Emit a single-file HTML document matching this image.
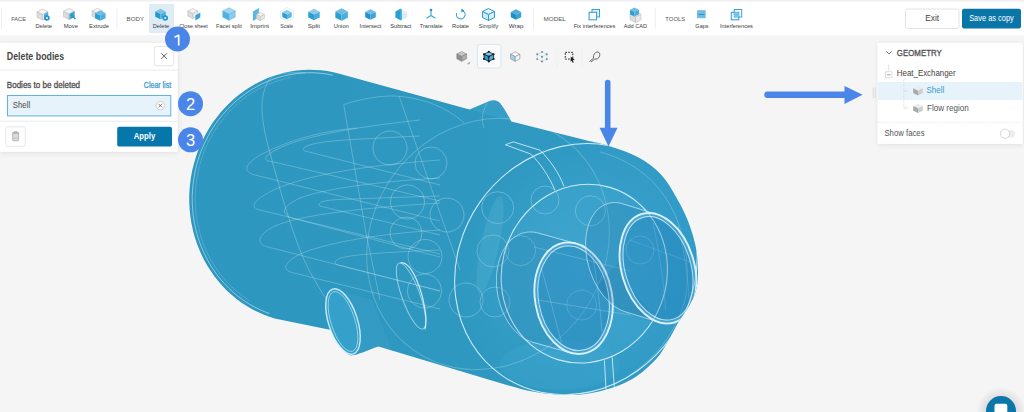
<!DOCTYPE html>
<html><head><meta charset="utf-8"><style>
*{box-sizing:border-box;margin:0;padding:0}
html,body{width:1024px;height:412px;overflow:hidden;background:#f5f5f5;font-family:"Liberation Sans", sans-serif;}
.abs{position:absolute}
svg text{font-family:"Liberation Sans", sans-serif}
</style></head><body>
<svg class="abs" style="left:0;top:0" width="1024" height="40"><rect x="0" y="0" width="1024" height="35.3" fill="#fff"/><rect x="0" y="0" width="1024" height="1.6" fill="#f0f0f0"/></svg>
<svg class="abs" style="left:0;top:0" width="1024" height="36"><rect x="149" y="4" width="25" height="29" fill="#deedf5"/><line x1="1.5" y1="8" x2="1.5" y2="29" stroke="#e8e8e8" stroke-width="0.8"/><line x1="117" y1="8" x2="117" y2="29" stroke="#e8e8e8" stroke-width="0.8"/><line x1="533.6" y1="8" x2="533.6" y2="29" stroke="#e8e8e8" stroke-width="0.8"/><line x1="655.3" y1="8" x2="655.3" y2="29" stroke="#e8e8e8" stroke-width="0.8"/><text x="11.17" y="20.90" font-size="5.87" font-weight="normal" fill="#555" textLength="14.87" lengthAdjust="spacingAndGlyphs">FACE</text><text x="126.57" y="20.90" font-size="5.87" font-weight="normal" fill="#555" textLength="17.47" lengthAdjust="spacingAndGlyphs">BODY</text><text x="543.57" y="20.90" font-size="5.87" font-weight="normal" fill="#555" textLength="22.27" lengthAdjust="spacingAndGlyphs">MODEL</text><text x="665.27" y="20.90" font-size="5.87" font-weight="normal" fill="#555" textLength="19.97" lengthAdjust="spacingAndGlyphs">TOOLS</text><text x="35.46" y="27.60" font-size="6.01" font-weight="normal" fill="#3a3a3a" textLength="16.58" lengthAdjust="spacingAndGlyphs">Delete</text><polygon points="42.5,9.0 48.0,11.75 42.5,14.5 37.0,11.75" fill="#f4f4f4" stroke="#bdbdbd" stroke-width="0.6" stroke-linejoin="round"/><polygon points="37.0,11.75 42.5,14.5 42.5,20.0 37.0,17.25" fill="#dcdcdc" stroke="#bdbdbd" stroke-width="0.6" stroke-linejoin="round"/><polygon points="42.5,14.5 48.0,11.75 48.0,17.25 42.5,20.0" fill="#e9e9e9" stroke="#bdbdbd" stroke-width="0.6" stroke-linejoin="round"/><polygon points="44,14.5 48,12.0 48,17.5 44,20.0" fill="#4aaee0"/><circle cx="47" cy="18.0" r="2.7" fill="#1f95cf"/><circle cx="47" cy="18.0" r="1" fill="#fff"/><text x="63.76" y="27.60" font-size="6.01" font-weight="normal" fill="#3a3a3a" textLength="14.18" lengthAdjust="spacingAndGlyphs">Move</text><polygon points="69,8.5 74.5,11.25 69,14.0 63.5,11.25" fill="#f4f4f4" stroke="#bdbdbd" stroke-width="0.6" stroke-linejoin="round"/><polygon points="63.5,11.25 69,14.0 69,19.5 63.5,16.75" fill="#dcdcdc" stroke="#bdbdbd" stroke-width="0.6" stroke-linejoin="round"/><polygon points="69,14.0 74.5,11.25 74.5,16.75 69,19.5" fill="#e9e9e9" stroke="#bdbdbd" stroke-width="0.6" stroke-linejoin="round"/><polygon points="69.5,14.0 74.5,11.3 74.5,16.8 69.5,19.5" fill="#3aa3d6"/><line x1="71" y1="15.0" x2="75.5" y2="19.0" stroke="#1f8fc4" stroke-width="1.4"/><text x="89.06" y="27.60" font-size="6.01" font-weight="normal" fill="#3a3a3a" textLength="19.88" lengthAdjust="spacingAndGlyphs">Extrude</text><polygon points="97.3,8.25 102.55,10.875 97.3,13.5 92.05,10.875" fill="#f4f4f4" stroke="#bdbdbd" stroke-width="0.6" stroke-linejoin="round"/><polygon points="92.05,10.875 97.3,13.5 97.3,18.75 92.05,16.125" fill="#dcdcdc" stroke="#bdbdbd" stroke-width="0.6" stroke-linejoin="round"/><polygon points="97.3,13.5 102.55,10.875 102.55,16.125 97.3,18.75" fill="#e9e9e9" stroke="#bdbdbd" stroke-width="0.6" stroke-linejoin="round"/><polygon points="100.3,10.25 105.55,12.875 100.3,15.5 95.05,12.875" fill="#6fbde4"/><polygon points="95.05,12.875 100.3,15.5 100.3,20.75 95.05,18.125" fill="#2b9fd3"/><polygon points="100.3,15.5 105.55,12.875 105.55,18.125 100.3,20.75" fill="#4aaedd"/><text x="152.76" y="27.60" font-size="6.01" font-weight="normal" fill="#3a3a3a" textLength="16.48" lengthAdjust="spacingAndGlyphs">Delete</text><polygon points="160.5,8.75 165.75,11.375 160.5,14.0 155.25,11.375" fill="#7cc3e6"/><polygon points="155.25,11.375 160.5,14.0 160.5,19.25 155.25,16.625" fill="#2596cc"/><polygon points="160.5,14.0 165.75,11.375 165.75,16.625 160.5,19.25" fill="#4aaedd"/><circle cx="165.2" cy="18.0" r="2.8" fill="#1f95cf"/><circle cx="165.2" cy="18.0" r="1.1" fill="#e6f1f7"/><text x="179.16" y="27.60" font-size="6.01" font-weight="normal" fill="#3a3a3a" textLength="28.68" lengthAdjust="spacingAndGlyphs">Close sheet</text><polygon points="192.8,8.5 197.8,11.0 192.8,13.5 187.8,11.0" fill="#f4f4f4" stroke="#bdbdbd" stroke-width="0.6" stroke-linejoin="round"/><polygon points="187.8,11.0 192.8,13.5 192.8,18.5 187.8,16.0" fill="#dcdcdc" stroke="#bdbdbd" stroke-width="0.6" stroke-linejoin="round"/><polygon points="192.8,13.5 197.8,11.0 197.8,16.0 192.8,18.5" fill="#e9e9e9" stroke="#bdbdbd" stroke-width="0.6" stroke-linejoin="round"/><polygon points="195.3,15.5 200.3,12.5 200.3,17.5 195.3,20.5" fill="#3aa3d6"/><text x="216.06" y="27.60" font-size="6.01" font-weight="normal" fill="#3a3a3a" textLength="25.68" lengthAdjust="spacingAndGlyphs">Facet split</text><polygon points="229,7.75 235.25,10.875 229,14.0 222.75,10.875" fill="#a6d6ef" stroke="#5cb6e0" stroke-width="0.5" stroke-linejoin="round"/><polygon points="222.75,10.875 229,14.0 229,20.25 222.75,17.125" fill="#4fb1de" stroke="#5cb6e0" stroke-width="0.5" stroke-linejoin="round"/><polygon points="229,14.0 235.25,10.875 235.25,17.125 229,20.25" fill="#8ccbea" stroke="#5cb6e0" stroke-width="0.5" stroke-linejoin="round"/><text x="250.16" y="27.60" font-size="6.01" font-weight="normal" fill="#3a3a3a" textLength="18.88" lengthAdjust="spacingAndGlyphs">Imprint</text><polygon points="252.89999999999998,11.5 258.9,8.0 258.9,17.5 252.89999999999998,21.0" fill="#5cb6e0"/><polygon points="260.4,12.5 264.4,14.5 260.4,16.5 256.4,14.5" fill="#f4f4f4" stroke="#bdbdbd" stroke-width="0.6" stroke-linejoin="round"/><polygon points="256.4,14.5 260.4,16.5 260.4,20.5 256.4,18.5" fill="#dcdcdc" stroke="#bdbdbd" stroke-width="0.6" stroke-linejoin="round"/><polygon points="260.4,16.5 264.4,14.5 264.4,18.5 260.4,20.5" fill="#e9e9e9" stroke="#bdbdbd" stroke-width="0.6" stroke-linejoin="round"/><text x="280.26" y="27.60" font-size="6.01" font-weight="normal" fill="#3a3a3a" textLength="12.98" lengthAdjust="spacingAndGlyphs">Scale</text><polygon points="287,7.5 293.5,11.0 293.5,18.0 287,21.5 280.5,18.0 280.5,11.0" fill="none" stroke="#cfe8f5" stroke-width="0.7"/><polygon points="287,9.75 291.75,12.125 287,14.5 282.25,12.125" fill="#8fcbea"/><polygon points="282.25,12.125 287,14.5 287,19.25 282.25,16.875" fill="#2b9fd3"/><polygon points="287,14.5 291.75,12.125 291.75,16.875 287,19.25" fill="#5cb6e0"/><text x="307.76" y="27.60" font-size="6.01" font-weight="normal" fill="#3a3a3a" textLength="12.28" lengthAdjust="spacingAndGlyphs">Split</text><polygon points="314,8.75 319.75,11.625 314,14.5 308.25,11.625" fill="#8fcbea"/><polygon points="308.25,11.625 314,14.5 314,20.25 308.25,17.375" fill="#2b9fd3"/><polygon points="314,14.5 319.75,11.625 319.75,17.375 314,20.25" fill="#4aaedd"/><text x="333.76" y="27.60" font-size="6.01" font-weight="normal" fill="#3a3a3a" textLength="15.08" lengthAdjust="spacingAndGlyphs">Union</text><polygon points="341.6,8.25 347.85,11.375 341.6,14.5 335.35,11.375" fill="#6fbde4"/><polygon points="335.35,11.375 341.6,14.5 341.6,20.75 335.35,17.625" fill="#2b9fd3"/><polygon points="341.6,14.5 347.85,11.375 347.85,17.625 341.6,20.75" fill="#4aaedd"/><text x="359.56" y="27.60" font-size="6.01" font-weight="normal" fill="#3a3a3a" textLength="21.88" lengthAdjust="spacingAndGlyphs">Intersect</text><polygon points="364.5,11.5 376.5,11.5 376.5,17.5 364.5,17.5" fill="#e3f1f9"/><polygon points="370.5,9.25 375.75,11.875 370.5,14.5 365.25,11.875" fill="#6fbde4"/><polygon points="365.25,11.875 370.5,14.5 370.5,19.75 365.25,17.125" fill="#2590c6"/><polygon points="370.5,14.5 375.75,11.875 375.75,17.125 370.5,19.75" fill="#3aa3d6"/><text x="390.16" y="27.60" font-size="6.01" font-weight="normal" fill="#3a3a3a" textLength="21.28" lengthAdjust="spacingAndGlyphs">Subtract</text><polygon points="401.4,8.75 407.15,11.625 401.4,14.5 395.65,11.625" fill="#e6f3fa"/><polygon points="395.65,11.625 401.4,14.5 401.4,20.25 395.65,17.375" fill="#e6f3fa"/><polygon points="401.4,14.5 407.15,11.625 407.15,17.375 401.4,20.25" fill="#d8edf7"/><polygon points="395.4,11.5 400.9,8.5 400.9,20.5 395.4,17.5" fill="#2b9fd3"/><polygon points="400.9,8.5 401.9,9.5 401.9,19.5 400.9,20.5" fill="#4aaedd"/><text x="419.76" y="27.60" font-size="6.01" font-weight="normal" fill="#3a3a3a" textLength="22.78" lengthAdjust="spacingAndGlyphs">Translate</text><g stroke="#3aa3d6" stroke-width="1.1" fill="none"><line x1="431" y1="10.5" x2="431" y2="15.5"/><line x1="431" y1="15.5" x2="426.5" y2="18.3"/><line x1="431" y1="15.5" x2="435.5" y2="18.3"/></g><circle cx="431" cy="10.0" r="1.3" fill="#1f95cf"/><text x="452.06" y="27.60" font-size="6.01" font-weight="normal" fill="#3a3a3a" textLength="16.98" lengthAdjust="spacingAndGlyphs">Rotate</text><path d="M462.90000000000003,10.9 A4.3,4.3 0 1 1 456.8,13.0" fill="none" stroke="#3aa3d6" stroke-width="1.1"/><polygon points="461.40000000000003,8.5 464.40000000000003,10.7 461.40000000000003,12.5" fill="#1f95cf"/><text x="478.76" y="27.60" font-size="6.01" font-weight="normal" fill="#3a3a3a" textLength="19.48" lengthAdjust="spacingAndGlyphs">Simplify</text><polygon points="488.5,8.5 494.5,11.5 488.5,14.5 482.5,11.5" fill="#e6f3fa" stroke="#2b9fd3" stroke-width="1" stroke-linejoin="round"/><polygon points="482.5,11.5 488.5,14.5 488.5,20.5 482.5,17.5" fill="#cfe8f5" stroke="#2b9fd3" stroke-width="1" stroke-linejoin="round"/><polygon points="488.5,14.5 494.5,11.5 494.5,17.5 488.5,20.5" fill="#dceff8" stroke="#2b9fd3" stroke-width="1" stroke-linejoin="round"/><text x="508.86" y="27.60" font-size="6.01" font-weight="normal" fill="#3a3a3a" textLength="14.58" lengthAdjust="spacingAndGlyphs">Wrap</text><polygon points="516,9.25 521.25,11.875 516,14.5 510.75,11.875" fill="#4aaedd"/><polygon points="510.75,11.875 516,14.5 516,19.75 510.75,17.125" fill="#1f8fc4"/><polygon points="516,14.5 521.25,11.875 521.25,17.125 516,19.75" fill="#3aa3d6"/><text x="573.66" y="27.60" font-size="6.01" font-weight="normal" fill="#3a3a3a" textLength="41.68" lengthAdjust="spacingAndGlyphs">Fix interferences</text><rect x="592.0" y="9.5" width="7.5" height="7.5" fill="#dff0f9" stroke="#3aa3d6" stroke-width="1"/><rect x="589.0999999999999" y="12.3" width="7.5" height="7.5" fill="#fff" stroke="#3aa3d6" stroke-width="1.1"/><text x="623.66" y="27.60" font-size="6.01" font-weight="normal" fill="#3a3a3a" textLength="23.28" lengthAdjust="spacingAndGlyphs">Add CAD</text><polygon points="635.5,11.5 641.0,14.25 635.5,17.0 630.0,14.25" fill="#f4f4f4" stroke="#bdbdbd" stroke-width="0.6" stroke-linejoin="round"/><polygon points="630.0,14.25 635.5,17.0 635.5,22.5 630.0,19.75" fill="#dcdcdc" stroke="#bdbdbd" stroke-width="0.6" stroke-linejoin="round"/><polygon points="635.5,17.0 641.0,14.25 641.0,19.75 635.5,22.5" fill="#e9e9e9" stroke="#bdbdbd" stroke-width="0.6" stroke-linejoin="round"/><polygon points="634.5,7.5 639.0,9.75 634.5,12.0 630.0,9.75" fill="#6fbde4"/><polygon points="630.0,9.75 634.5,12.0 634.5,16.5 630.0,14.25" fill="#2b9fd3"/><polygon points="634.5,12.0 639.0,9.75 639.0,14.25 634.5,16.5" fill="#4aaedd"/><text x="695.36" y="27.60" font-size="6.01" font-weight="normal" fill="#3a3a3a" textLength="13.18" lengthAdjust="spacingAndGlyphs">Gaps</text><rect x="697.1" y="10.2" width="8.6" height="8" fill="#6fbde4"/><line x1="698.4" y1="14.5" x2="704.4" y2="14.5" stroke="#1f8fc4" stroke-width="0.9"/><text x="719.96" y="27.60" font-size="6.01" font-weight="normal" fill="#3a3a3a" textLength="32.98" lengthAdjust="spacingAndGlyphs">Interferences</text><rect x="731.3" y="12.3" width="7.5" height="7.5" fill="none" stroke="#3aa3d6" stroke-width="1.1"/><rect x="734.2" y="9.5" width="7.5" height="7.5" fill="none" stroke="#3aa3d6" stroke-width="1"/><rect x="734.2" y="12.3" width="4.6" height="4.6" fill="#7cc3e6"/><rect x="905.5" y="9" width="53.5" height="19.5" rx="2" fill="#fff" stroke="#e3e3e3" stroke-width="1"/><text x="925.25" y="21.25" font-size="8.73" font-weight="normal" fill="#444" textLength="13.85" lengthAdjust="spacingAndGlyphs">Exit</text><rect x="962" y="8.8" width="59" height="19.8" rx="2" fill="#0a76a8"/><text x="969.14" y="21.25" font-size="8.94" font-weight="normal" fill="#fff" textLength="44.72" lengthAdjust="spacingAndGlyphs">Save as copy</text></svg><svg class="abs" style="left:0;top:0" width="1024" height="412"><defs><clipPath id="cp"><path d="M339.4,73.7 L469.5,109.5 L489,101.3 C493,99.6 497,100 500,103 C504,108 508,115 511.3,121.5 L590,141.2 C592.8,141.9 598.6,142.6 606.6,145.2 C614.6,147.8 628.6,152.1 637.7,157.0 C646.8,161.9 654.5,167.6 661.0,174.4 C667.5,181.2 672.0,189.9 676.5,197.7 C681.0,205.5 684.8,212.6 688.0,221.0 C691.2,229.4 694.3,239.0 696.0,248.0 C697.7,257.0 698.1,267.7 698.0,275.0 C697.9,282.3 697.0,286.8 695.5,292.0 C694.0,297.2 691.9,300.8 689.0,306.0 C686.1,311.2 681.7,316.8 678.0,323.0 C674.3,329.2 670.5,337.2 667.0,343.0 C663.5,348.8 662.0,352.5 657.0,358.0 C652.0,363.5 644.3,371.1 637.0,376.0 C629.7,380.9 621.7,384.5 613.0,387.5 C604.3,390.5 593.4,392.8 585.0,394.0 C576.6,395.2 570.2,395.0 562.7,394.8 C555.2,394.6 546.6,393.6 540.0,392.7 C533.4,391.8 528.8,390.9 523.0,389.5 C517.2,388.1 508.0,385.3 505.0,384.5 L378.5,346.5 C368,350 358,355 351,355.5 C345,354 338,345 336,331 L274.6,318.4 L268.7,316.5 L262.9,314.3 L257.3,311.8 L251.7,309.0 L246.4,305.8 L241.2,302.4 L236.2,298.7 L231.3,294.6 L226.7,290.4 L222.3,285.8 L218.2,281.1 L214.2,276.1 L210.6,270.8 L207.2,265.4 L204.0,259.8 L201.2,254.0 L198.6,248.1 L196.4,242.0 L194.4,235.8 L192.8,229.5 L191.4,223.0 L190.4,216.6 L189.7,210.0 L189.3,203.5 L189.2,196.9 L189.5,190.3 L190.1,183.7 L191.0,177.1 L192.2,170.6 L193.8,164.2 L195.6,157.9 L197.7,151.6 L200.2,145.5 L202.9,139.6 L206.0,133.7 L209.3,128.1 L212.8,122.6 L216.7,117.4 L220.7,112.3 L225.1,107.5 L229.6,102.9 L234.3,98.6 L239.3,94.5 L244.4,90.7 L249.7,87.2 L255.2,84.0 L260.8,81.2 L266.5,78.6 L272.4,76.3 L278.3,74.4 L284.3,72.8 L290.4,71.5 L296.6,70.6 L302.7,70.0 L308.9,69.7 L315.1,69.9 L321.2,70.3 L327.3,71.1 L333.4,72.2 L339.4,73.7 Z"/></clipPath><radialGradient id="rg" cx="0.5" cy="0.5" r="0.5"><stop offset="0" stop-color="#5cbde3" stop-opacity="0.28"/><stop offset="0.7" stop-color="#5cbde3" stop-opacity="0.10"/><stop offset="1" stop-color="#5cbde3" stop-opacity="0"/></radialGradient><linearGradient id="lg" x1="0" y1="0" x2="1" y2="0"><stop offset="0" stop-color="#2d97bf"/><stop offset="0.55" stop-color="#2e98c0"/><stop offset="1" stop-color="#329bc7"/></linearGradient></defs><path d="M339.4,73.7 L469.5,109.5 L489,101.3 C493,99.6 497,100 500,103 C504,108 508,115 511.3,121.5 L590,141.2 C592.8,141.9 598.6,142.6 606.6,145.2 C614.6,147.8 628.6,152.1 637.7,157.0 C646.8,161.9 654.5,167.6 661.0,174.4 C667.5,181.2 672.0,189.9 676.5,197.7 C681.0,205.5 684.8,212.6 688.0,221.0 C691.2,229.4 694.3,239.0 696.0,248.0 C697.7,257.0 698.1,267.7 698.0,275.0 C697.9,282.3 697.0,286.8 695.5,292.0 C694.0,297.2 691.9,300.8 689.0,306.0 C686.1,311.2 681.7,316.8 678.0,323.0 C674.3,329.2 670.5,337.2 667.0,343.0 C663.5,348.8 662.0,352.5 657.0,358.0 C652.0,363.5 644.3,371.1 637.0,376.0 C629.7,380.9 621.7,384.5 613.0,387.5 C604.3,390.5 593.4,392.8 585.0,394.0 C576.6,395.2 570.2,395.0 562.7,394.8 C555.2,394.6 546.6,393.6 540.0,392.7 C533.4,391.8 528.8,390.9 523.0,389.5 C517.2,388.1 508.0,385.3 505.0,384.5 L378.5,346.5 C368,350 358,355 351,355.5 C345,354 338,345 336,331 L274.6,318.4 L268.7,316.5 L262.9,314.3 L257.3,311.8 L251.7,309.0 L246.4,305.8 L241.2,302.4 L236.2,298.7 L231.3,294.6 L226.7,290.4 L222.3,285.8 L218.2,281.1 L214.2,276.1 L210.6,270.8 L207.2,265.4 L204.0,259.8 L201.2,254.0 L198.6,248.1 L196.4,242.0 L194.4,235.8 L192.8,229.5 L191.4,223.0 L190.4,216.6 L189.7,210.0 L189.3,203.5 L189.2,196.9 L189.5,190.3 L190.1,183.7 L191.0,177.1 L192.2,170.6 L193.8,164.2 L195.6,157.9 L197.7,151.6 L200.2,145.5 L202.9,139.6 L206.0,133.7 L209.3,128.1 L212.8,122.6 L216.7,117.4 L220.7,112.3 L225.1,107.5 L229.6,102.9 L234.3,98.6 L239.3,94.5 L244.4,90.7 L249.7,87.2 L255.2,84.0 L260.8,81.2 L266.5,78.6 L272.4,76.3 L278.3,74.4 L284.3,72.8 L290.4,71.5 L296.6,70.6 L302.7,70.0 L308.9,69.7 L315.1,69.9 L321.2,70.3 L327.3,71.1 L333.4,72.2 L339.4,73.7 Z" fill="url(#lg)"/><g clip-path="url(#cp)"><ellipse cx="576" cy="269" rx="130" ry="117" transform="rotate(-55 576 269)" fill="url(#rg)"/><ellipse cx="560" cy="365" rx="60" ry="25" fill="rgba(90,190,230,0.12)"/><path d="M469.5,109.5 L489,101.3 C493,99.6 497,100 500,103 C504,108 508,115 511.3,121.5 Z" fill="rgba(110,200,235,0.13)"/><path d="M487,103 C482,112 481,120 484,128" fill="none" stroke="rgba(220,243,253,0.26)" stroke-width="1"/><path d="M333,290 L372,300 L392,349 L353,356 Z" fill="rgba(110,200,235,0.10)"/><path d="M269.6,313.6 L269.6,313.6 L264.0,311.5 L258.5,309.0 L253.1,306.3 L247.8,303.2 L242.8,299.8 L237.9,296.2 L233.2,292.3 L228.7,288.1 L224.4,283.7 L220.3,279.0 L216.5,274.1 L212.9,269.0 L209.6,263.7 L206.6,258.2 L203.8,252.6 L201.3,246.8 L199.1,240.8 L197.2,234.8 L195.6,228.6 L194.3,222.4 L193.3,216.1 L192.7,209.7 L192.3,203.3 L192.2,196.8 L192.5,190.4 L193.1,184.0 L194.0,177.6 L195.1,171.3 L196.6,165.0 L198.4,158.9 L200.5,152.8 L202.9,146.8 L205.6,141.0 L208.5,135.3 L211.7,129.8 L215.2,124.5 L218.9,119.3 L222.9,114.4 L227.1,109.7 L231.5,105.2 L236.1,101.0 L241.0,97.0 L246.0,93.3 L251.1,89.9 L256.5,86.8 L261.9,83.9 L267.5,81.4 L273.2,79.2 L279.0,77.3 L284.9,75.7 L290.8,74.5 L296.8,73.6 L302.8,73.0 L308.9,72.7 L314.9,72.8 L320.9,73.3 L326.9,74.0 L332.8,75.2" fill="none" stroke="rgba(220,243,253,0.60)" stroke-width="0.9"/><path d="M249.3,300.6 L249.3,300.6 L244.4,297.3 L239.6,293.7 L235.0,289.9 L230.6,285.8 L226.5,281.5 L222.5,276.9 L218.8,272.2 L215.3,267.2 L212.1,262.0 L209.1,256.7 L206.5,251.2 L204.0,245.5 L201.9,239.7 L200.1,233.8 L198.5,227.8 L197.3,221.7 L196.3,215.5 L195.7,209.3 L195.3,203.1 L195.2,196.8 L195.5,190.6 L196.1,184.3 L196.9,178.1 L198.1,171.9 L199.5,165.8 L201.3,159.8 L203.3,153.9 L205.6,148.1 L208.2,142.4 L211.1,136.9 L214.2,131.5 L217.6,126.3 L221.2,121.3 L225.1,116.5 L229.1,111.9 L233.4,107.5 L237.9,103.4 L242.6,99.5 L247.5,95.9 L252.5,92.5 L257.7,89.5 L263.1,86.7 L268.5,84.2 L274.1,82.1 L279.7,80.2 L285.5,78.7 L291.2,77.4" fill="none" stroke="rgba(220,243,253,0.26)" stroke-width="0.8"/><path d="M305,72.5 C300.8,72.8 286.2,72.4 280.0,74.0 C273.8,75.6 270.9,77.0 267.9,82.0 C264.9,87.0 262.5,95.2 262.0,103.7 C261.5,112.2 262.9,121.8 265.0,132.8 C267.1,143.9 270.8,156.0 274.7,170.0 C278.6,184.0 283.4,201.7 288.3,216.6 C293.2,231.5 298.0,246.4 303.8,259.3 C309.6,272.2 316.7,283.9 323.2,294.3 C329.7,304.7 336.5,313.9 342.6,321.5 C348.7,329.1 357.1,336.9 360.0,340.0" fill="none" stroke="rgba(220,243,253,0.30)" stroke-width="1"/><ellipse cx="488" cy="244" rx="129.6" ry="117" transform="rotate(-55.1 488 244)" fill="none" stroke="rgba(220,243,253,0.26)" stroke-width="1"/><path d="M343.7,104.6 C360,99 380,95.5 395,96 C410,97 425,100 440,107 C450,112 458,117 464,123 M343.7,104.6 L365.6,230.7 L380,300 M399,96 L460,270" fill="none" stroke="rgba(220,243,253,0.30)" stroke-width="0.9"/><path d="M357,128 C320,131 290,140 262,154 C246,163 240,172 257,175.5 L440,221" fill="none" stroke="rgba(220,243,253,0.30)" stroke-width="0.9"/><path d="M420,120 C345,128 300,138 280,148 C262,156 262,161 274,162 L440,201" fill="none" stroke="rgba(220,243,253,0.30)" stroke-width="0.9"/><path d="M420,136 C360,139 335,140 318,143 C301,146 300,151 309,152 L440,185" fill="none" stroke="rgba(220,243,253,0.30)" stroke-width="0.9"/><path d="M440,160 C360,166 310,175 278,188 C258,197 248,206 258,209.5 L440,254" fill="none" stroke="rgba(220,243,253,0.30)" stroke-width="0.9"/><path d="M440,178 C370,182 320,190 300,198 C285,205 278,213 292,218 L440,257" fill="none" stroke="rgba(220,243,253,0.30)" stroke-width="0.9"/><path d="M440,196 C380,198 345,199 332,200 C318,201 315,206 324,207 L440,235" fill="none" stroke="rgba(220,243,253,0.30)" stroke-width="0.9"/><path d="M440,203 C360,208 300,215 275,226 C258,234 255,244 268,247 L440,291" fill="none" stroke="rgba(220,243,253,0.30)" stroke-width="0.9"/><path d="M440,230 C370,234 320,245 300,254 C285,262 280,270 294,273 L440,309" fill="none" stroke="rgba(220,243,253,0.30)" stroke-width="0.9"/><path d="M440,250 C390,252 360,254 345,257 C333,259 332,265 342,266 L440,291" fill="none" stroke="rgba(220,243,253,0.30)" stroke-width="0.9"/><circle cx="390" cy="148" r="17" fill="none" stroke="rgba(220,243,253,0.30)" stroke-width="1"/><circle cx="431" cy="163" r="16" fill="none" stroke="rgba(220,243,253,0.30)" stroke-width="1"/><circle cx="407.5" cy="202" r="17" fill="none" stroke="rgba(220,243,253,0.30)" stroke-width="1"/><circle cx="447" cy="215" r="17" fill="none" stroke="rgba(220,243,253,0.30)" stroke-width="1"/><circle cx="406" cy="233" r="16" fill="none" stroke="rgba(220,243,253,0.30)" stroke-width="1"/><circle cx="425" cy="256.5" r="17" fill="none" stroke="rgba(220,243,253,0.30)" stroke-width="1"/><circle cx="424.5" cy="291" r="17" fill="none" stroke="rgba(220,243,253,0.30)" stroke-width="1"/><circle cx="466" cy="300" r="17" fill="none" stroke="rgba(220,243,253,0.30)" stroke-width="1"/><circle cx="497.7" cy="207.7" r="16" fill="none" stroke="rgba(220,243,253,0.30)" stroke-width="1"/><circle cx="493" cy="251" r="16" fill="none" stroke="rgba(220,243,253,0.30)" stroke-width="1"/><circle cx="495" cy="302" r="15" fill="none" stroke="rgba(220,243,253,0.30)" stroke-width="1"/><circle cx="590.4" cy="210.8" r="15" fill="none" stroke="rgba(220,243,253,0.30)" stroke-width="1"/><circle cx="520.6" cy="250.6" r="15" fill="none" stroke="rgba(220,243,253,0.30)" stroke-width="1"/><circle cx="581.7" cy="305" r="15" fill="none" stroke="rgba(220,243,253,0.30)" stroke-width="1"/><circle cx="545" cy="200" r="14" fill="none" stroke="rgba(220,243,253,0.30)" stroke-width="1"/><circle cx="640" cy="250" r="14" fill="none" stroke="rgba(220,243,253,0.30)" stroke-width="1"/><ellipse cx="490" cy="245" rx="9" ry="50" transform="rotate(12 490 245)" fill="rgba(140,210,240,0.14)"/><ellipse cx="575.9" cy="269.1" rx="129.6" ry="117" transform="rotate(-55.1 575.9 269.1)" fill="none" stroke="rgba(220,243,253,0.90)" stroke-width="1.1"/><ellipse cx="584.3" cy="273.6" rx="90" ry="82.5" transform="rotate(-73.4 584.3 273.6)" fill="rgba(100,195,235,0.10)" stroke="rgba(220,243,253,0.90)" stroke-width="1.1"/><path d="M600,152 C630,160 655,178 670,205 C685,232 690,265 686,295 C680,325 660,355 630,375" fill="none" stroke="rgba(220,243,253,0.26)" stroke-width="1"/><path d="M505.4,144.8 L513.2,141.8 L540,150.2 C550,160 559,173 564,186.5 M505.4,144.8 L530.7,154 C540,163 549,176 554.8,190" fill="none" stroke="rgba(220,243,253,0.90)" stroke-width="0.9"/><path d="M604.4,360.3 L606,390 M612.2,357.2 L614.5,390" fill="none" stroke="rgba(220,243,253,0.90)" stroke-width="0.9"/><g opacity="0.13"><path d="M532.8,342.3 A38.5,56.2 -10 1 1 538.4,233.1 A38.5,56.2 -10 1 1 532.8,342.3 Z" fill="#145f91"/><path d="M570.8,352.8 L532.8,342.3 L538.4,233.1 L576.4,243.6 Z" fill="#145f91"/><path d="M570.8,352.8 A38.5,56.2 -10 1 1 576.4,243.6 A38.5,56.2 -10 1 1 570.8,352.8 Z" fill="#145f91"/></g><path d="M532.8,342.3 L532.1,342.1 L531.5,341.9 L530.8,341.6 L530.1,341.4 L529.4,341.1 L528.8,340.8 L528.1,340.5 L527.4,340.2 L526.7,339.9 L526.1,339.5 L525.4,339.2 L524.8,338.8 L524.1,338.4 L523.5,338.0 L522.8,337.5 L522.2,337.1 L521.5,336.6 L520.9,336.2 L520.3,335.7 L519.6,335.2 L519.0,334.7 L518.4,334.1 L517.8,333.6 L517.2,333.0 L516.6,332.4 L516.0,331.9 L515.4,331.3 L514.8,330.6 L514.2,330.0 L513.7,329.4 L513.1,328.7 L512.6,328.1 L512.0,327.4 L511.5,326.7 L510.9,326.0 L510.4,325.3 L509.9,324.6 L509.4,323.8 L508.9,323.1 L508.4,322.3 L507.9,321.6 L507.4,320.8 L506.9,320.0 L506.5,319.2 L506.0,318.4 L505.6,317.6 L505.1,316.7 L504.7,315.9 L504.3,315.1 L503.9,314.2 L503.5,313.3 L503.1,312.5 L502.7,311.6 L502.4,310.7 L502.0,309.8 L501.7,308.9 L501.3,308.0 L501.0,307.1 L500.7,306.2 L500.4,305.3 L500.1,304.4 L499.8,303.4 L499.5,302.5 L499.3,301.6 L499.0,300.6 L498.8,299.7 L498.6,298.7 L498.4,297.8 L498.1,296.8 L498.0,295.8 L497.8,294.9 L497.6,293.9 L497.4,292.9 L497.3,292.0 L497.2,291.0 L497.0,290.0 L496.9,289.0 L496.8,288.1 L496.7,287.1 L496.7,286.1 L496.6,285.2 L496.5,284.2 L496.5,283.2 L496.5,282.2 L496.5,281.3 L496.4,280.3 L496.5,279.4 L496.5,278.4 L496.5,277.4 L496.5,276.5 L496.6,275.5 L496.7,274.6 L496.7,273.6 L496.8,272.7 L496.9,271.8 L497.1,270.8 L497.2,269.9 L497.3,269.0 L497.5,268.1 L497.6,267.2 L497.8,266.3 L498.0,265.4 L498.2,264.5 L498.4,263.6 L498.6,262.7 L498.8,261.9 L499.1,261.0 L499.3,260.2 L499.6,259.3 L499.9,258.5 L500.1,257.7 L500.4,256.8 L500.7,256.0 L501.1,255.2 L501.4,254.5 L501.7,253.7 L502.1,252.9 L502.4,252.2 L502.8,251.4 L503.2,250.7 L503.6,250.0 L504.0,249.2 L504.4,248.5 L504.8,247.9 L505.2,247.2 L505.6,246.5 L506.1,245.9 L506.5,245.2 L507.0,244.6 L507.5,244.0 L507.9,243.4 L508.4,242.8 L508.9,242.3 L509.4,241.7 L509.9,241.2 L510.5,240.6 L511.0,240.1 L511.5,239.6 L512.1,239.1 L512.6,238.7 L513.2,238.2 L513.7,237.8 L514.3,237.3 L514.9,236.9 L515.5,236.5 L516.1,236.2 L516.7,235.8 L517.3,235.4 L517.9,235.1 L518.5,234.8 L519.1,234.5 L519.7,234.2 L520.3,233.9 L521.0,233.7 L521.6,233.5 L522.3,233.2 L522.9,233.0 L523.5,232.9 L524.2,232.7 L524.9,232.5 L525.5,232.4 L526.2,232.3 L526.8,232.2 L527.5,232.1 L528.2,232.0 L528.8,232.0 L529.5,232.0 L530.2,232.0 L530.9,232.0 L531.6,232.0 L532.2,232.0 L532.9,232.1 L533.6,232.1 L534.3,232.2 L535.0,232.3 L535.6,232.4 L536.3,232.6 L537.0,232.7 L537.7,232.9 L538.4,233.1" fill="none" stroke="rgba(220,243,253,0.75)" stroke-width="0.9"/><path d="M570.8,352.8 L532.8,342.3 M576.4,243.6 L538.4,233.1" fill="none" stroke="rgba(220,243,253,0.75)" stroke-width="0.9"/><ellipse cx="573.6" cy="298.2" rx="38.5" ry="56.2" transform="rotate(-10 573.6 298.2)" fill="rgba(35,135,200,0.18)" stroke="rgba(225,245,253,0.95)" stroke-width="2"/><ellipse cx="573.6" cy="298.2" rx="36.8" ry="54.5" transform="rotate(-10 573.6 298.2)" fill="none" stroke="rgba(120,200,235,0.35)" stroke-width="1.5"/><ellipse cx="573.6" cy="298.2" rx="35.1" ry="52.800000000000004" transform="rotate(-10 573.6 298.2)" fill="none" stroke="rgba(220,243,253,0.75)" stroke-width="1.2"/><path d="M541,267.6 C548,290 555,318 561.4,342.3 M537.6,300 L630,315 M534,247 L630,271 M592,250.6 C597,280 600,305 602,332" fill="none" stroke="rgba(220,243,253,0.26)" stroke-width="0.9"/><path d="M652.8,222.8 C660,255 664,285 665.6,310 M678,226 C684,250 688,275 689,299 M630,240 L690,262" fill="none" stroke="rgba(220,243,253,0.26)" stroke-width="0.9"/><path d="M598,285 C610,305 630,318 660,323 L640,300 C630,290 622,275 619,262 Z" fill="rgba(20,90,130,0.10)"/><g opacity="0.13"><path d="M625.0,311.7 A36.3,56.6 -16.6 1 1 623.0,203.9 A36.3,56.6 -16.6 1 1 625.0,311.7 Z" fill="#145f91"/><path d="M659.0,322.2 L625.0,311.7 L623.0,203.9 L657.0,214.4 Z" fill="#145f91"/><path d="M659.0,322.2 A36.3,56.6 -16.6 1 1 657.0,214.4 A36.3,56.6 -16.6 1 1 659.0,322.2 Z" fill="#145f91"/></g><path d="M625.0,311.7 L624.3,311.5 L623.6,311.2 L622.9,311.0 L622.3,310.7 L621.6,310.4 L620.9,310.1 L620.3,309.8 L619.6,309.5 L618.9,309.1 L618.3,308.8 L617.6,308.4 L617.0,308.0 L616.3,307.6 L615.7,307.1 L615.0,306.7 L614.3,306.3 L613.7,305.8 L613.1,305.3 L612.4,304.8 L611.8,304.3 L611.2,303.8 L610.5,303.2 L609.9,302.7 L609.3,302.1 L608.7,301.5 L608.0,300.9 L607.4,300.3 L606.8,299.7 L606.2,299.0 L605.7,298.4 L605.1,297.7 L604.5,297.1 L603.9,296.4 L603.3,295.7 L602.8,295.0 L602.2,294.3 L601.7,293.5 L601.1,292.8 L600.6,292.0 L600.1,291.3 L599.6,290.5 L599.1,289.7 L598.5,288.9 L598.0,288.1 L597.6,287.3 L597.1,286.5 L596.6,285.7 L596.1,284.8 L595.7,284.0 L595.2,283.1 L594.8,282.3 L594.4,281.4 L593.9,280.5 L593.5,279.7 L593.1,278.8 L592.7,277.9 L592.4,277.0 L592.0,276.1 L591.6,275.2 L591.3,274.2 L590.9,273.3 L590.6,272.4 L590.3,271.5 L590.0,270.5 L589.6,269.6 L589.4,268.6 L589.1,267.7 L588.8,266.7 L588.5,265.8 L588.3,264.8 L588.1,263.9 L587.8,262.9 L587.6,262.0 L587.4,261.0 L587.2,260.0 L587.0,259.1 L586.8,258.1 L586.7,257.1 L586.5,256.2 L586.4,255.2 L586.3,254.3 L586.2,253.3 L586.1,252.3 L586.0,251.4 L585.9,250.4 L585.8,249.5 L585.8,248.5 L585.7,247.6 L585.7,246.6 L585.7,245.7 L585.6,244.7 L585.6,243.8 L585.7,242.9 L585.7,242.0 L585.7,241.0 L585.8,240.1 L585.8,239.2 L585.9,238.3 L586.0,237.4 L586.1,236.5 L586.2,235.6 L586.3,234.7 L586.4,233.9 L586.6,233.0 L586.7,232.2 L586.9,231.3 L587.0,230.5 L587.2,229.6 L587.4,228.8 L587.6,228.0 L587.9,227.2 L588.1,226.4 L588.3,225.6 L588.6,224.8 L588.8,224.0 L589.1,223.3 L589.4,222.5 L589.7,221.8 L590.0,221.1 L590.3,220.4 L590.6,219.7 L591.0,219.0 L591.3,218.3 L591.7,217.6 L592.0,217.0 L592.4,216.3 L592.8,215.7 L593.2,215.1 L593.6,214.5 L594.0,213.9 L594.4,213.3 L594.9,212.7 L595.3,212.2 L595.7,211.7 L596.2,211.1 L596.7,210.6 L597.1,210.1 L597.6,209.7 L598.1,209.2 L598.6,208.7 L599.1,208.3 L599.6,207.9 L600.2,207.5 L600.7,207.1 L601.2,206.7 L601.8,206.4 L602.3,206.0 L602.9,205.7 L603.4,205.4 L604.0,205.1 L604.6,204.8 L605.2,204.5 L605.7,204.3 L606.3,204.1 L606.9,203.8 L607.5,203.7 L608.1,203.5 L608.7,203.3 L609.4,203.2 L610.0,203.0 L610.6,202.9 L611.2,202.8 L611.9,202.7 L612.5,202.7 L613.1,202.6 L613.8,202.6 L614.4,202.6 L615.1,202.6 L615.7,202.6 L616.4,202.6 L617.1,202.7 L617.7,202.8 L618.4,202.8 L619.0,203.0 L619.7,203.1 L620.4,203.2 L621.0,203.4 L621.7,203.5 L622.4,203.7 L623.0,203.9" fill="none" stroke="rgba(220,243,253,0.75)" stroke-width="0.9"/><path d="M659.0,322.2 L625.0,311.7 M657.0,214.4 L623.0,203.9" fill="none" stroke="rgba(220,243,253,0.75)" stroke-width="0.9"/><ellipse cx="658" cy="268.3" rx="36.3" ry="56.6" transform="rotate(-16.6 658 268.3)" fill="rgba(35,135,200,0.22)" stroke="rgba(225,245,253,0.95)" stroke-width="2"/><ellipse cx="658" cy="268.3" rx="34.599999999999994" ry="54.9" transform="rotate(-16.6 658 268.3)" fill="none" stroke="rgba(120,200,235,0.35)" stroke-width="1.5"/><ellipse cx="658" cy="268.3" rx="32.9" ry="53.2" transform="rotate(-16.6 658 268.3)" fill="none" stroke="rgba(220,243,253,0.75)" stroke-width="1.2"/></g><ellipse cx="343" cy="321.5" rx="14.5" ry="34" transform="rotate(-17.7 343 321.5)" fill="#35a0c9" stroke="rgba(220,243,253,0.90)" stroke-width="1.4"/><ellipse cx="343" cy="321.5" rx="12" ry="31.2" transform="rotate(-17.7 343 321.5)" fill="none" stroke="rgba(220,243,253,0.60)" stroke-width="0.9"/><ellipse cx="411" cy="296" rx="9" ry="35" transform="rotate(-20 411 296)" fill="none" stroke="rgba(220,243,253,0.60)" stroke-width="1"/><path d="M400.7,262.7 C412,262 423,290 426,317 C426,325 425,329 424.7,329.3" fill="none" stroke="rgba(220,243,253,0.90)" stroke-width="1.2"/></svg><svg class="abs" style="left:0;top:0" width="1024" height="412"><rect x="477.5" y="44.5" width="23.5" height="23.5" rx="2" fill="#fafafa" stroke="#d3e8f4" stroke-width="1"/><polygon points="461.7,51.5 466.59999999999997,53.949999999999996 461.7,56.4 456.8,53.949999999999996" fill="#c8c8c8" stroke="#7a7a7a" stroke-width="0.5" stroke-linejoin="round"/><polygon points="456.8,53.949999999999996 461.7,56.4 461.7,61.3 456.8,58.85" fill="#8f8f8f" stroke="#7a7a7a" stroke-width="0.5" stroke-linejoin="round"/><polygon points="461.7,56.4 466.59999999999997,53.949999999999996 466.59999999999997,58.85 461.7,61.3" fill="#ababab" stroke="#7a7a7a" stroke-width="0.5" stroke-linejoin="round"/><path d="M467.3,63.8 L469.3,63.8 L469.3,61.8" stroke="#777" stroke-width="0.7" fill="none"/><polygon points="488.8,51.800000000000004 493.6,54.2 488.8,56.6 484.0,54.2" fill="#7cc8ee" stroke="#1a1a1a" stroke-width="0.8" stroke-linejoin="round"/><polygon points="484.0,54.2 488.8,56.6 488.8,61.4 484.0,59.0" fill="#2a98d2" stroke="#1a1a1a" stroke-width="0.8" stroke-linejoin="round"/><polygon points="488.8,56.6 493.6,54.2 493.6,59.0 488.8,61.4" fill="#49afe2" stroke="#1a1a1a" stroke-width="0.8" stroke-linejoin="round"/><circle cx="488.8" cy="51.8" r="1.05" fill="#1a1a1a"/><circle cx="493.6" cy="54.2" r="1.05" fill="#1a1a1a"/><circle cx="493.6" cy="59" r="1.05" fill="#1a1a1a"/><circle cx="488.8" cy="61.4" r="1.05" fill="#1a1a1a"/><circle cx="484" cy="59" r="1.05" fill="#1a1a1a"/><circle cx="484" cy="54.2" r="1.05" fill="#1a1a1a"/><circle cx="488.8" cy="56.6" r="1.05" fill="#1a1a1a"/><polygon points="515.2,51.9 519.9000000000001,54.25 515.2,56.6 510.50000000000006,54.25" fill="#fbfbfb" stroke="#8a8a8a" stroke-width="0.6" stroke-linejoin="round"/><polygon points="510.50000000000006,54.25 515.2,56.6 515.2,61.300000000000004 510.50000000000006,58.95" fill="#9fd3ef" stroke="#8a8a8a" stroke-width="0.6" stroke-linejoin="round"/><polygon points="515.2,56.6 519.9000000000001,54.25 519.9000000000001,58.95 515.2,61.300000000000004" fill="#f2f2f2" stroke="#8a8a8a" stroke-width="0.6" stroke-linejoin="round"/><g fill="none" stroke="#b5dcf1" stroke-width="0.7"><polygon points="542,51.9 546.8,54.3 546.8,59.1 542,61.5 537.2,59.1 537.2,54.3"/><polyline points="537.2,54.3 542,56.7 546.8,54.3"/><line x1="542" y1="56.7" x2="542" y2="61.5"/></g><circle cx="542" cy="51.9" r="0.95" fill="#7d7d7d"/><circle cx="546.8" cy="54.3" r="0.95" fill="#7d7d7d"/><circle cx="546.8" cy="59.1" r="0.95" fill="#7d7d7d"/><circle cx="542" cy="61.5" r="0.95" fill="#7d7d7d"/><circle cx="537.2" cy="59.1" r="0.95" fill="#7d7d7d"/><circle cx="537.2" cy="54.3" r="0.95" fill="#7d7d7d"/><circle cx="542" cy="56.7" r="0.95" fill="#7d7d7d"/><line x1="557.3" y1="46" x2="557.3" y2="66.5" stroke="#e2e2e2" stroke-width="0.6" stroke-dasharray="1 1"/><line x1="581.9" y1="46" x2="581.9" y2="66.5" stroke="#e2e2e2" stroke-width="0.6" stroke-dasharray="1 1"/><rect x="565.3" y="52.3" width="7.5" height="6.8" fill="none" stroke="#2a2a2a" stroke-width="1" stroke-dasharray="1.7 1.2"/><polygon points="570.8,56.8 574.8,59.6 572.8,60.2 573.8,62.3 572.6,62.7 571.8,60.7 570.6,61.8" fill="#1e1e1e"/><path d="M589.5,61.5 L593.5,58.3 M591,62 L594.5,59.2 M593.5,58.3 C593,54.5 595.5,51.5 598,52 C600.5,52.8 600.5,56.5 597.5,58.8 L594.5,59.2" fill="none" stroke="#555" stroke-width="0.9"/></svg><div class="abs" style="left:0;top:43px;width:177.5px;height:108.7px;box-shadow:0 1px 5px rgba(0,0,0,0.09)"></div><svg class="abs" style="left:0;top:0" width="240" height="160"><rect x="0" y="42.9" width="177.5" height="108.8" fill="#fff"/><rect x="154.4" y="46.4" width="19.4" height="19.4" rx="2" fill="#fff" stroke="#e2e2e2" stroke-width="0.9"/><path d="M161.3,53.3 L166.9,58.9 M166.9,53.3 L161.3,58.9" stroke="#555" stroke-width="0.9"/><line x1="0" y1="70" x2="177.5" y2="70" stroke="#ebebeb" stroke-width="1"/><text x="6.79" y="60.00" font-size="10.20" font-weight="bold" fill="#474747" textLength="57.42" lengthAdjust="spacingAndGlyphs">Delete bodies</text><text x="6.81" y="88.00" font-size="9.78" font-weight="normal" fill="#505050" textLength="73.28" lengthAdjust="spacingAndGlyphs" stroke="#505050" stroke-width="0.35">Bodies to be deleted</text><text x="143.86" y="88.00" font-size="8.38" font-weight="normal" fill="#3797cc" textLength="27.27" lengthAdjust="spacingAndGlyphs" stroke="#3797cc" stroke-width="0.25">Clear list</text><rect x="7.5" y="95.5" width="163.3" height="20.4" fill="#e7f3fa" stroke="#62b2df" stroke-width="1"/><text x="12.74" y="108.00" font-size="8.94" font-weight="normal" fill="#4d4d4d" textLength="17.52" lengthAdjust="spacingAndGlyphs">Shell</text><circle cx="160.3" cy="105.6" r="4.3" fill="#fafafa" stroke="#c4c4c4" stroke-width="0.8"/><path d="M158.6,103.9 L162,107.3 M162,103.9 L158.6,107.3" stroke="#666" stroke-width="0.8"/><line x1="0" y1="121.2" x2="177.5" y2="121.2" stroke="#ebebeb" stroke-width="1"/><rect x="5.8" y="126.8" width="19.5" height="19.5" rx="2" fill="#fff" stroke="#e5e5e5" stroke-width="0.9"/><rect x="12.7" y="133.4" width="5.8" height="7.4" rx="0.6" fill="#dcdcdc" stroke="#a8a8a8" stroke-width="0.8"/><rect x="12" y="132.3" width="7.2" height="1.2" fill="#a8a8a8"/><rect x="14.3" y="131.3" width="2.6" height="1.2" fill="none" stroke="#a8a8a8" stroke-width="0.6"/><line x1="13.5" y1="138" x2="17.7" y2="138" stroke="#a8a8a8" stroke-width="0.6"/><rect x="117.2" y="126.7" width="54.8" height="19.9" rx="2.2" fill="#0677ab"/><text x="133.75" y="139.10" font-size="8.66" font-weight="bold" fill="#fff" textLength="21.59" lengthAdjust="spacingAndGlyphs">Apply</text></svg><div class="abs" style="left:877.5px;top:43px;width:145px;height:100.8px;box-shadow:0 1px 5px rgba(0,0,0,0.09)"></div><svg class="abs" style="left:0;top:0" width="1024" height="160"><rect x="877.5" y="42.9" width="145" height="100.9" fill="#fff"/><rect x="877.5" y="82" width="145" height="18" fill="#e6f3fa"/><path d="M886.3,51.3 L889,54 L891.7,51.3" fill="none" stroke="#666" stroke-width="0.9"/><text x="896.85" y="56.20" font-size="8.80" font-weight="normal" fill="#505050" textLength="44.90" lengthAdjust="spacingAndGlyphs" stroke="#505050" stroke-width="0.3">GEOMETRY</text><line x1="888.7" y1="64.5" x2="888.7" y2="71" stroke="#d5d5d5" stroke-width="0.7"/><rect x="885.6" y="71.8" width="6.4" height="6" fill="#fff" stroke="#d0d0d0" stroke-width="0.7"/><line x1="887" y1="74.8" x2="890.6" y2="74.8" stroke="#777" stroke-width="0.7"/><text x="896.85" y="75.70" font-size="8.80" font-weight="normal" fill="#444" textLength="58.80" lengthAdjust="spacingAndGlyphs">Heat_Exchanger</text><line x1="903.8" y1="80" x2="903.8" y2="108" stroke="#cfcfcf" stroke-width="0.7" stroke-dasharray="1 1"/><line x1="903.8" y1="91" x2="907.5" y2="91" stroke="#cfcfcf" stroke-width="0.7"/><line x1="903.8" y1="108" x2="907.5" y2="108" stroke="#cfcfcf" stroke-width="0.7"/><polygon points="918,85.9 922.8,88.3 918,90.7 913.2,88.3" fill="#ececec"/><polygon points="913.2,88.3 918,90.7 918,95.5 913.2,93.10000000000001" fill="#a9a9a9"/><polygon points="918,90.7 922.8,88.3 922.8,93.10000000000001 918,95.5" fill="#cdcdcd"/><polygon points="918,103.5 922.8,105.89999999999999 918,108.3 913.2,105.89999999999999" fill="#ececec"/><polygon points="913.2,105.89999999999999 918,108.3 918,113.1 913.2,110.7" fill="#a9a9a9"/><polygon points="918,108.3 922.8,105.89999999999999 922.8,110.7 918,113.1" fill="#cdcdcd"/><text x="926.55" y="93.10" font-size="8.80" font-weight="normal" fill="#3a9ad0" textLength="17.70" lengthAdjust="spacingAndGlyphs">Shell</text><text x="926.94" y="110.80" font-size="8.94" font-weight="normal" fill="#555" textLength="41.82" lengthAdjust="spacingAndGlyphs">Flow region</text><line x1="877.5" y1="122.3" x2="1022.5" y2="122.3" stroke="#ebebeb" stroke-width="0.8" stroke-dasharray="2 1"/><text x="884.46" y="136.30" font-size="8.52" font-weight="normal" fill="#555" textLength="40.08" lengthAdjust="spacingAndGlyphs">Show faces</text><rect x="1002" y="130" width="13" height="7.5" rx="3.7" fill="#ededed"/><circle cx="1005" cy="133.7" r="4.6" fill="#fff" stroke="#d2d2d2" stroke-width="0.9"/><line x1="873.3" y1="87.5" x2="873.3" y2="98" stroke="#d2d2d2" stroke-width="0.7"/><line x1="875.3" y1="87.5" x2="875.3" y2="98" stroke="#d2d2d2" stroke-width="0.7"/></svg><svg class="abs" style="left:0;top:0" width="1024" height="412"><line x1="767.5" y1="94.8" x2="846" y2="94.8" stroke="#4a86e8" stroke-width="6.4" stroke-linecap="round"/><polygon points="844.5,86 862.6,94.8 844.5,104" fill="#4a86e8"/><line x1="607.7" y1="82.5" x2="607.7" y2="130" stroke="#4a86e8" stroke-width="5.6" stroke-linecap="round"/><polygon points="599.6,127.8 617.5,127.8 608.5,146.4" fill="#4a86e8"/><circle cx="177.5" cy="39" r="12.5" fill="#4a86e8"/><path d="M178.7,45.6 L178.7,34.8 M179.0,35 L174.5,37.2" stroke="#fff" stroke-width="1.7" fill="none" stroke-linecap="butt"/><circle cx="190.5" cy="103.7" r="12.5" fill="#4a86e8"/><text x="190.5" y="109.7" text-anchor="middle" font-size="16.5" fill="#fff">2</text><circle cx="190.5" cy="139.8" r="12.5" fill="#4a86e8"/><text x="190.5" y="145.8" text-anchor="middle" font-size="16.5" fill="#fff">3</text><defs><radialGradient id="sh"><stop offset="0.6" stop-color="#000" stop-opacity="0.10"/><stop offset="1" stop-color="#000" stop-opacity="0"/></radialGradient></defs><circle cx="1001" cy="412" r="25" fill="url(#sh)"/><circle cx="1001" cy="411" r="15" fill="#0a77a8"/><rect x="994.5" y="403.7" width="12.8" height="14" rx="2" fill="#fff"/></svg></body></html>
